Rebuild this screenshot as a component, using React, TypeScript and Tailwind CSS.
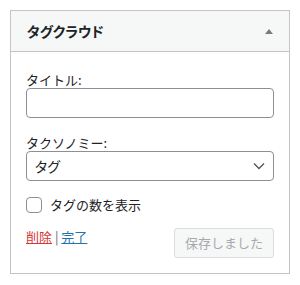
const font = {
  fontFamily: '"Noto Sans CJK JP", "Noto Sans", sans-serif',
};

const ChevronDown = () => (
  <svg width="12" height="8" viewBox="0 0 12 8" fill="none">
    <path d="M1 1.5 6 6.5l5-5" stroke="#50575e" strokeWidth="1.4" />
  </svg>
);

const TagCloudWidget = () => {
  return (
    <div className="w-[280px] border border-[#c3c4c7] bg-white">
      <div className="flex h-[41px] items-center justify-between border-b border-[#c3c4c7] bg-[#f6f7f7] pl-[16px] pr-[16px]">
        <h3 className="text-[14px] font-bold text-[#1d2327] [font-feature-settings:'palt']">
          タグクラウド
        </h3>
        <span className="h-0 w-0 border-x-[4px] border-b-[5px] border-x-transparent border-b-[#787c82]" />
      </div>
      <div className="px-[15px] pb-[15px] pt-[19px] text-[13px] text-[#1d2327]">
        <label className="block h-[17px] leading-[17px]">タイトル:</label>
        <input
          type="text"
          className="block h-[30px] w-full rounded-[4px] border border-[#8c8f94] bg-white px-2"
        />
        <label className="mt-[16px] block h-[17px] leading-[17px]">タクソノミー:</label>
        <div className="flex h-[30px] w-full items-center justify-between rounded-[4px] border border-[#8c8f94] pl-[8px] pr-[8px] text-[14px] [font-feature-settings:'palt']">
          <span>タグ</span>
          <ChevronDown />
        </div>
        <label className="mt-[16px] flex h-[16px] items-center gap-[8px]">
          <span className="h-[16px] w-[16px] shrink-0 rounded-[4px] border border-[#8c8f94] bg-white" />
          <span className="leading-[16px]">タグの数を表示</span>
        </label>
        <div className="mt-[15px] flex items-start justify-between">
          <div className="pt-[1px] leading-[16px]">
            <a className="text-[#d63638] underline">削除</a>
            <span className="text-[#646970]"> | </span>
            <a className="text-[#2271b1] underline">完了</a>
          </div>
          <button className="h-[30px] w-[100px] rounded-[3px] border border-[#dcdcde] bg-[#f6f7f7] text-[13px] text-[#a7aaad]">
            保存しました
          </button>
        </div>
      </div>
    </div>
  );
};

export default function App() {
  return (
    <div className="h-[285px] w-[300px] bg-white p-[10px]" style={font}>
      <TagCloudWidget />
    </div>
  );
}
